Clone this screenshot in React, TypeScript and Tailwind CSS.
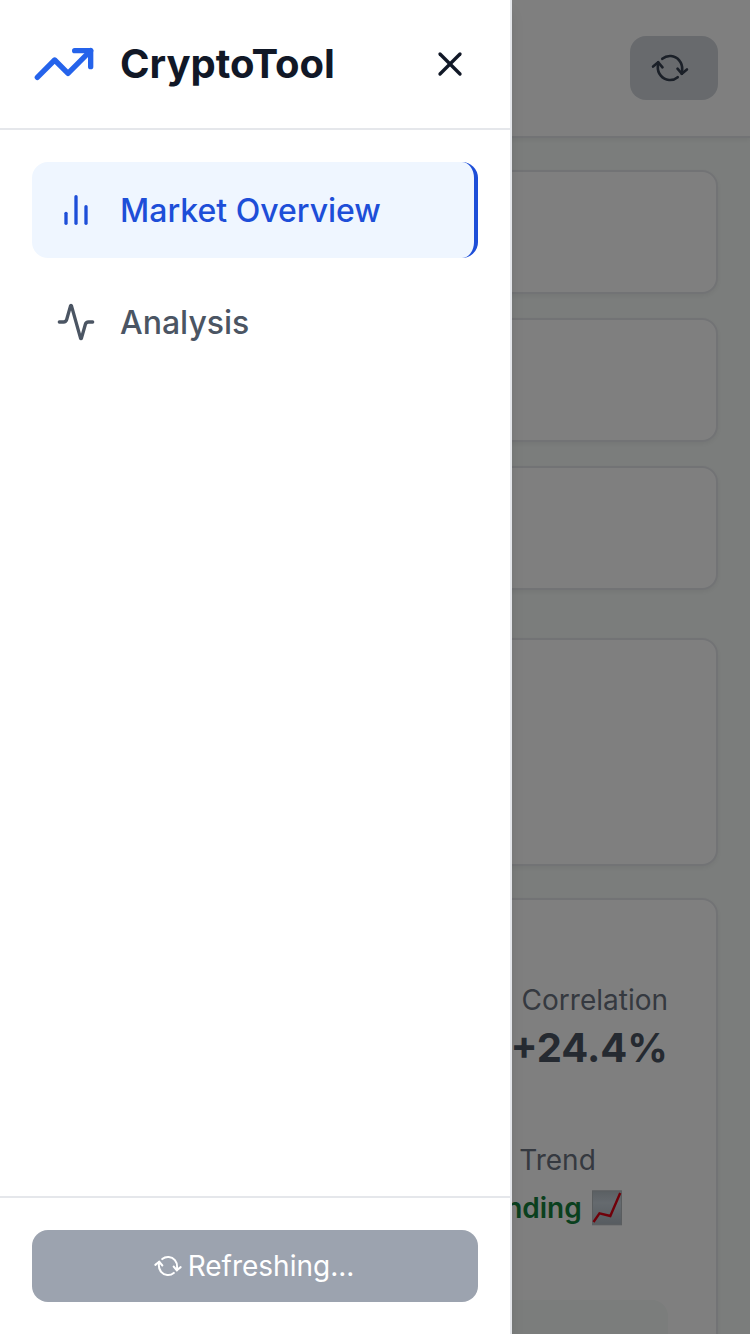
import React from "react";

type IconProps = { className?: string; children: React.ReactNode };

function Icon({ className = "", children }: IconProps) {
  return (
    <svg
      viewBox="0 0 24 24"
      fill="none"
      stroke="currentColor"
      strokeWidth="2"
      strokeLinecap="round"
      strokeLinejoin="round"
      className={`shrink-0 ${className}`}
    >
      {children}
    </svg>
  );
}

function RefreshIcon({ className }: { className: string }) {
  return (
    <Icon className={className}>
      <path d="M3 12a9 9 0 0 1 9-9 9.75 9.75 0 0 1 6.74 2.74L21 8" />
      <path d="M21 3v5h-5" />
      <path d="M21 12a9 9 0 0 1-9 9 9.75 9.75 0 0 1-6.74-2.74L3 16" />
      <path d="M8 16H3v5" />
    </Icon>
  );
}

function ChartEmoji() {
  return (
    <svg viewBox="0 0 30 36" className="h-9 w-[30px] shrink-0">
      <defs>
        <linearGradient id="paper" x1="0" y1="0" x2="0" y2="1">
          <stop offset="0" stopColor="#b6bfc6" />
          <stop offset="0.35" stopColor="#cbd5de" />
          <stop offset="1" stopColor="#aeb8c1" />
        </linearGradient>
      </defs>
      <rect x="0.5" y="0.8" width="29" height="34" fill="url(#paper)" stroke="#b4babf" />
      <path d="M1.5 32 7.5 23.3 18.3 26 28.2 3" fill="none" stroke="#e00012" strokeWidth="2.4" />
    </svg>
  );
}

function Dashboard() {
  return (
    <div className="flex h-full flex-col bg-[#f6faf8]">
      <header className="flex h-[138px] shrink-0 items-center justify-end border-b-2 border-[#e5e7eb] bg-white px-8 shadow-[0_2px_4px_rgba(0,0,0,0.05)]">
        <button className="flex h-16 w-[88px] items-center rounded-2xl bg-[#d1d5db] pl-6 text-[#374151]">
          <RefreshIcon className="size-8 rotate-[50deg]" />
        </button>
      </header>
      <main className="flex min-h-0 flex-1 flex-col px-8 pt-8">
        <div className="flex shrink-0 flex-col gap-6">
          <div className="h-[124px] rounded-2xl border-2 border-[#e5e7eb] bg-white shadow-[0_2px_4px_rgba(0,0,0,0.05)]" />
          <div className="h-[124px] rounded-2xl border-2 border-[#e5e7eb] bg-white shadow-[0_2px_4px_rgba(0,0,0,0.05)]" />
          <div className="h-[124px] rounded-2xl border-2 border-[#e5e7eb] bg-white shadow-[0_2px_4px_rgba(0,0,0,0.05)]" />
        </div>
        <div className="mt-12 h-[228px] shrink-0 rounded-2xl border-2 border-[#e5e7eb] bg-white shadow-[0_2px_4px_rgba(0,0,0,0.05)]" />
        <section className="mt-8 flex h-[600px] shrink-0 flex-col rounded-2xl border-2 border-[#e5e7eb] bg-white px-12 pt-20 shadow-[0_2px_4px_rgba(0,0,0,0.05)]">
          <div className="flex flex-col items-end">
            <div className="text-[28px] leading-10 text-[#6b7280]">Correlation</div>
            <div className="text-[40px] leading-[56px] font-bold text-[#4b5563]">+24.4%</div>
          </div>
          <div className="mt-16 flex w-[221px] flex-col items-center self-end">
            <div className="text-[28px] leading-10 text-[#6b7280]">Trend</div>
            <div className="-ml-8 flex h-14 items-center gap-2.5 text-[28px] font-semibold text-[#15803d]">
              <span>Trending</span>
              <ChartEmoji />
            </div>
          </div>
          <div className="mt-16 h-40 rounded-2xl bg-[#f6faf8]" />
        </section>
      </main>
    </div>
  );
}

function Sidebar() {
  return (
    <aside className="absolute inset-y-0 left-0 flex w-[512px] flex-col border-r-2 border-[#e5e7eb] bg-white shadow-lg">
      <div className="flex h-[130px] shrink-0 items-center border-b-2 border-[#e5e7eb] px-8">
        <Icon className="size-16 text-[#2563eb]">
          <path d="M16 7h6v6" />
          <path d="m22 7-8.5 8.5-5-5L2 17" />
        </Icon>
        <h1 className="ml-6 text-[40px] leading-[56px] font-bold text-[#111827]">CryptoTool</h1>
        <button className="ml-auto p-2 text-[#111827]">
          <Icon className="size-10">
            <path d="M18 6 6 18" />
            <path d="m6 6 12 12" />
          </Icon>
        </button>
      </div>
      <nav className="flex flex-1 flex-col gap-4 p-8 text-[32px] font-medium">
        <a className="flex h-24 items-center gap-6 rounded-2xl border-r-4 border-[#1d4ed8] bg-[#eff6ff] px-6 text-[#1d4ed8]">
          <Icon className="size-10">
            <path d="M18 20V10" />
            <path d="M12 20V4" />
            <path d="M6 20v-6" />
          </Icon>
          <span className="pt-0.5">Market Overview</span>
        </a>
        <a className="flex h-24 items-center gap-6 rounded-2xl px-6 text-[#4b5563]">
          <Icon className="size-10">
            <path d="M22 12h-2.48a2 2 0 0 0-1.93 1.46l-2.35 8.36a.25.25 0 0 1-.48 0L9.24 2.18a.25.25 0 0 0-.48 0l-2.35 8.36A2 2 0 0 1 4.49 12H2" />
          </Icon>
          <span className="pt-0.5">Analysis</span>
        </a>
      </nav>
      <div className="shrink-0 border-t-2 border-[#e5e7eb] p-8">
        <button className="flex h-[72px] w-full items-center justify-center gap-2 rounded-2xl bg-[#9ca3af] text-[28px] text-white">
          <RefreshIcon className="size-6 rotate-[50deg]" />
          <span>Refreshing...</span>
        </button>
      </div>
    </aside>
  );
}

export default function App() {
  return (
    <div className="relative h-[1334px] w-[750px] overflow-hidden font-['Inter',sans-serif]">
      <Dashboard />
      <div className="absolute inset-0 bg-black/50" />
      <Sidebar />
    </div>
  );
}
